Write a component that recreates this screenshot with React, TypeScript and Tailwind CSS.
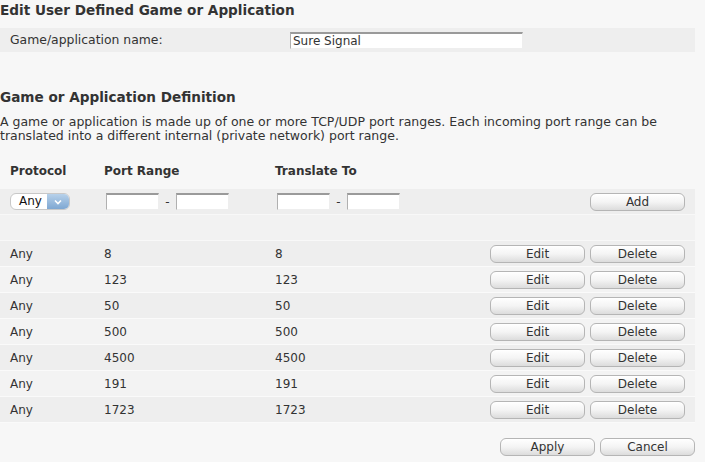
import React from "react";

const rows = ["8", "123", "50", "500", "4500", "191", "1723"];

function Btn({ children, className = "" }: { children: React.ReactNode; className?: string }) {
  return (
    <button
      className={
        "h-[18px] w-[95px] rounded-[6px] border border-[#b5b5b5] bg-gradient-to-b from-white via-[#f4f4f4] to-[#dcdcdc] text-[12px] leading-[16px] text-[#333] shadow-[inset_0_1px_0_#fff] " +
        className
      }
    >
      {children}
    </button>
  );
}

function Field({ w, value = "" }: { w: string; value?: string }) {
  return (
    <div
      className={
        "h-[17px] bg-white border-t-2 border-t-[#9a9a9a] border-l border-l-[#b0b0b0] border-r border-r-[#eeeeee] border-b border-b-[#eeeeee] px-[2px] text-[12px] leading-[14px] text-[#333] " +
        w
      }
    >
      {value}
    </div>
  );
}

export default function App() {
  return (
    <div
      className="w-[705px] h-[462px] overflow-hidden bg-[#f7f7f7] text-[#333] text-[12px]"
      style={{ fontFamily: '"DejaVu Sans", Verdana, sans-serif' }}
    >
      <div className="h-[28px] pt-[1px] text-[13.6px] font-bold leading-[18px]">
        Edit User Defined Game or Application
      </div>
      <div className="h-[24px] w-[695px] bg-[#eeeeee] flex items-center">
        <div className="w-[290px] pl-[10px] text-[12.4px]">Game/application name:</div>
        <Field w="w-[233px]" value="Sure Signal" />
      </div>
      <div className="h-[32px]" />
      <div className="h-[26px] text-[13.6px] font-bold leading-[26px]">
        Game or Application Definition
      </div>
      <div className="pt-[5px] leading-[14px] h-[33px] text-[12.5px]">
        A game or application is made up of one or more TCP/UDP port ranges. Each incoming port range can be
        <br />
        translated into a different internal (private network) port range.
      </div>
      <div className="h-[46px] flex items-center pt-[10px] pl-[10px] font-bold">
        <div className="w-[94px]">Protocol</div>
        <div className="w-[171px]">Port Range</div>
        <div>Translate To</div>
      </div>
      <div className="w-[695px]">
        <div className="h-[26px] bg-[#eeeeee] border-b border-[#f8f8f8] flex items-center pl-[10px] pr-[10px]">
          <div className="w-[94px]">
            <div className="h-[17px] w-[60px] rounded-[6px] border border-[#c8c8c8] bg-white flex overflow-hidden">
              <div className="flex-1 pl-[8px] leading-[15px] text-[#111]">Any</div>
              <div className="w-[22px] h-full bg-gradient-to-b from-[#b7d1ea] to-[#7ea7d2] flex items-center justify-center">
                <svg width="8" height="6" viewBox="0 0 8 6">
                  <path d="M1 1.5 L4 4.5 L7 1.5" stroke="#fff" strokeWidth="1.6" fill="none" />
                </svg>
              </div>
            </div>
          </div>
          <div className="w-[171px] flex items-center">
            <div className="ml-[2px]"><Field w="w-[53px]" /></div>
            <div className="w-[17px] text-center">-</div>
            <Field w="w-[53px]" />
          </div>
          <div className="flex items-center">
            <div className="ml-[2px]"><Field w="w-[53px]" /></div>
            <div className="w-[17px] text-center">-</div>
            <Field w="w-[53px]" />
          </div>
          <div className="flex-1" />
          <Btn>Add</Btn>
        </div>
        <div className="h-[26px] bg-[#f2f2f2] border-b border-[#f8f8f8]" />
        {rows.map((r, i) => (
          <div
            key={i}
            className={
              "h-[26px] border-b border-[#fafafa] flex items-center pl-[10px] pr-[10px] " +
              (i % 2 === 0 ? "bg-[#eeeeee]" : "bg-[#f3f3f3]")
            }
          >
            <div className="w-[94px]">Any</div>
            <div className="w-[171px]">{r}</div>
            <div>{r}</div>
            <div className="flex-1" />
            <div className="flex gap-[5px]">
              <Btn>Edit</Btn>
              <Btn>Delete</Btn>
            </div>
          </div>
        ))}
      </div>
      <div className="w-[695px] flex justify-end gap-[5px] mt-[15px]">
        <Btn>Apply</Btn>
        <Btn>Cancel</Btn>
      </div>
    </div>
  );
}
